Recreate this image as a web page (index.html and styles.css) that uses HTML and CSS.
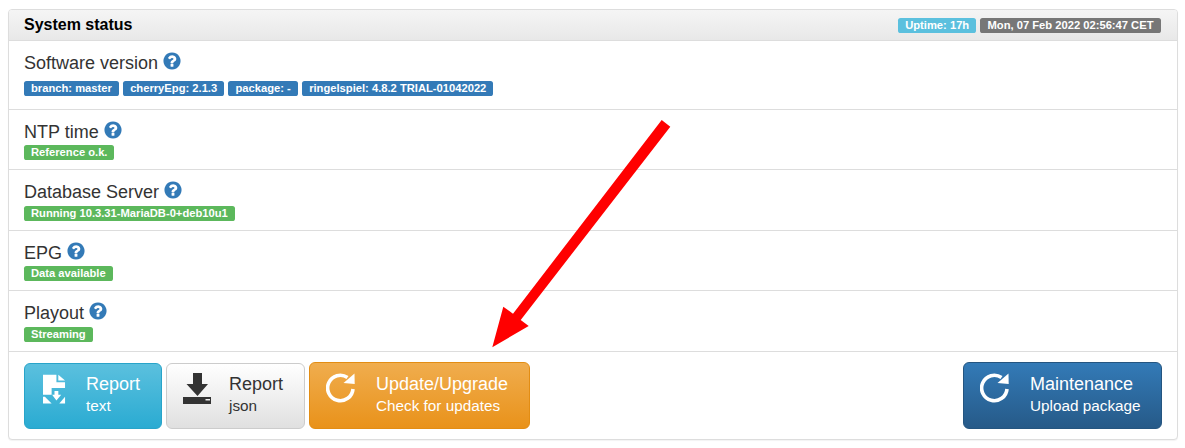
FILE: index.html
```html
<!DOCTYPE html>
<html lang="en">
<head>
  <meta charset="UTF-8">
  <title>System status</title>
  <link rel="stylesheet" href="styles.css">
</head>
<body>
  <svg width="0" height="0" class="defs">
    <symbol id="help" viewBox="0 0 1792 1792"><path d="M1024 1376v-192q0-14-9-23t-23-9h-192q-14 0-23 9t-9 23v192q0 14 9 23t23 9h192q14 0 23-9t9-23zm256-672q0-88-55.5-163t-138.5-116-170-41q-243 0-371 213-15 24 8 42l132 100q7 6 19 6 16 0 25-12 53-68 86-92 34-24 86-24 48 0 85.5 26t37.5 59q0 38-20 61t-68 45q-63 28-115.5 86.5t-52.5 125.5v36q0 14 9 23t23 9h192q14 0 23-9t9-23q0-19 21.5-49.5t54.5-49.5q32-18 49-28.5t46-35 44.5-48 28-60.5 12.5-81zm384 192q0 209-103 385.5t-279.5 279.5-385.5 103-385.5-103-279.5-279.5-103-385.5 103-385.5 279.5-279.5 385.5-103 385.5 103 279.5 279.5 103 385.5z"/></symbol>
    <symbol id="repeat" viewBox="0 0 30 30">
      <path d="M21.5 4.5A12.7 12.7 0 1 0 27 16" fill="none" stroke="currentColor" stroke-width="3.6"/>
      <path d="M28.5 0.5L28.7 11L17.5 10Z"/>
    </symbol>
  </svg>

  <div class="panel">
    <div class="panel-heading">
      <h3>System status</h3>
      <div class="labels">
        <span class="label label-info">Uptime: 17h</span>
        <span class="label label-default">Mon, 07 Feb 2022 02:56:47 CET</span>
      </div>
    </div>

    <div class="row row-version">
      <h4>Software version <svg class="help"><use href="#help"/></svg></h4>
      <div class="labels">
        <span class="label label-primary">branch: master</span>
        <span class="label label-primary">cherryEpg: 2.1.3</span>
        <span class="label label-primary">package: -</span>
        <span class="label label-primary">ringelspiel: 4.8.2 TRIAL-01042022</span>
      </div>
    </div>
    <div class="row">
      <h4>NTP time <svg class="help"><use href="#help"/></svg></h4>
      <span class="label label-success">Reference o.k.</span>
    </div>
    <div class="row row-tall">
      <h4>Database Server <svg class="help"><use href="#help"/></svg></h4>
      <span class="label label-success">Running 10.3.31-MariaDB-0+deb10u1</span>
    </div>
    <div class="row">
      <h4>EPG <svg class="help"><use href="#help"/></svg></h4>
      <span class="label label-success">Data available</span>
    </div>
    <div class="row row-tall">
      <h4>Playout <svg class="help"><use href="#help"/></svg></h4>
      <span class="label label-success">Streaming</span>
    </div>

    <div class="panel-footer">
      <a class="btn btn-small btn-info" href="#">
        <svg class="btn-icon" viewBox="0 0 24 30"><path d="M0 0H14V8H23V14H9V21H0Z"/><path d="M16 0L23 6H16Z"/><path d="M12 17H16V21H19L14 27L9.5 21H12Z"/><path d="M0 23H2L9 30H0Z"/><path d="M23 23V30H17Z"/></svg>
        <span class="btn-text"><b>Report</b><small>text</small></span>
      </a>
      <a class="btn btn-small btn-default" href="#">
        <svg class="btn-icon" viewBox="0 0 28 31"><path d="M10 0H19V11H25L14.5 23L3.5 11H10Z"/><path fill-rule="evenodd" d="M0 24H28V31H0ZM22.5 26V27.5H27V26Z"/></svg>
        <span class="btn-text"><b>Report</b><small>json</small></span>
      </a>
      <a class="btn btn-warning" href="#">
        <svg class="btn-icon repeat"><use href="#repeat"/></svg>
        <span class="btn-text"><b>Update/Upgrade</b><small>Check for updates</small></span>
      </a>
      <a class="btn btn-primary" href="#">
        <svg class="btn-icon repeat"><use href="#repeat"/></svg>
        <span class="btn-text"><b>Maintenance</b><small>Upload package</small></span>
      </a>
    </div>
  </div>

  <!-- annotation over the page -->
  <svg class="arrow" width="1185" height="448" viewBox="0 0 1185 448">
    <path d="M661.7 120L670.3 126.7L520.7 320L528.7 326L492.3 347.3L503.3 306.7L513 313.7Z"/>
  </svg>
</body>
</html>
```

FILE: styles.css
```css
* {
  margin: 0;
  padding: 0;
  box-sizing: border-box;
}
html, body {
  height: 448px;
  overflow: hidden;
}
body {
  font-family: "Liberation Sans", Arial, sans-serif;
  background-color: #fff;
  color: #333;
  padding: 9px 7px 0 8px;
}
.defs {
  position: absolute;
}
.panel {
  height: 431px;
  background-color: #fff;
  border: 1px solid #ddd;
  border-radius: 4px;
  box-shadow: 0 1px 1px rgba(0, 0, 0, 0.05);
  display: flex;
  flex-direction: column;
}
.panel-heading {
  height: 31px;
  display: flex;
  justify-content: space-between;
  align-items: center;
  padding: 0 16.5px 0 15px;
  background-image: linear-gradient(to bottom, #f5f5f5, #e8e8e8);
  border-bottom: 1px solid #ddd;
  border-radius: 3px 3px 0 0;
}
.panel-heading h3 {
  font-size: 16px;
  font-weight: bold;
  color: #000;
}
.labels {
  display: flex;
  gap: 4.3px;
}
.label {
  display: block;
  width: fit-content;
  font-size: 11.2px;
  font-weight: bold;
  line-height: 11px;
  color: #fff;
  padding: 2px 7px;
  border-radius: 2.6px;
  white-space: nowrap;
}
.label-info { background-color: #5bc0de; }
.label-default { background-color: #777; }
.label-primary { background-color: #337ab7; }
.label-success { background-color: #5cb85c; }

.row {
  height: 60px;
  padding: 10px 15px 0;
  border-bottom: 1px solid #ddd;
}
.row-tall {
  height: 61px;
}
.row-version {
  height: 69px;
}
.row h4 {
  height: 20px;
  font-size: 18px;
  font-weight: normal;
  line-height: 20px;
  margin-bottom: 5px;
}
.row-tall h4 {
  margin-bottom: 6px;
}
.row-version h4 {
  margin-bottom: 10px;
}
.help {
  width: 20px;
  height: 20px;
  fill: #337ab7;
  margin-left: -1px;
  vertical-align: -2px;
}

.panel-footer {
  flex: 1;
  display: flex;
  gap: 4px;
  padding: 10px 15px 0;
}
.btn {
  height: 67px;
  display: flex;
  text-decoration: none;
  border: 1px solid;
  border-radius: 6px;
  padding: 10px 20px 0 18px;
}
.btn-small {
  height: 66px;
  margin-top: 1px;
  padding-top: 9px;
}
.btn-icon {
  width: 23px;
  height: 30px;
  flex-shrink: 0;
  margin-top: 1px;
  margin-right: 20px;
  fill: currentColor;
}
.btn-text b {
  display: block;
  font-size: 18px;
  font-weight: normal;
  line-height: 22px;
}
.btn-text small {
  display: block;
  font-size: 15.3px;
  line-height: 20px;
  margin-top: 1px;
}
.btn-info {
  width: 138px;
  color: #fff;
  border-color: #28a4c9;
  background-image: linear-gradient(to bottom, #5bc0de, #2aabd2);
}
.btn-default {
  width: 139px;
  color: #333;
  border-color: #ccc;
  background-image: linear-gradient(to bottom, #fff, #e0e0e0);
  padding-left: 16px;
}
.btn-default .btn-icon {
  width: 28px;
  height: 31px;
  margin-top: 0;
  margin-right: 18px;
}
.btn-warning {
  width: 221px;
  color: #fff;
  border-color: #e38d13;
  background-image: linear-gradient(to bottom, #f0ad4e, #e9921a);
}
.btn-primary {
  width: 199px;
  color: #fff;
  border-color: #245580;
  background-image: linear-gradient(to bottom, #337ab7, #265a88);
  margin-left: auto;
}
.repeat {
  width: 30px;
  height: 30px;
  margin: 0 20px 0 -2px;
}
.arrow {
  position: absolute;
  left: 0;
  top: 0;
  fill: #f00;
}
```
